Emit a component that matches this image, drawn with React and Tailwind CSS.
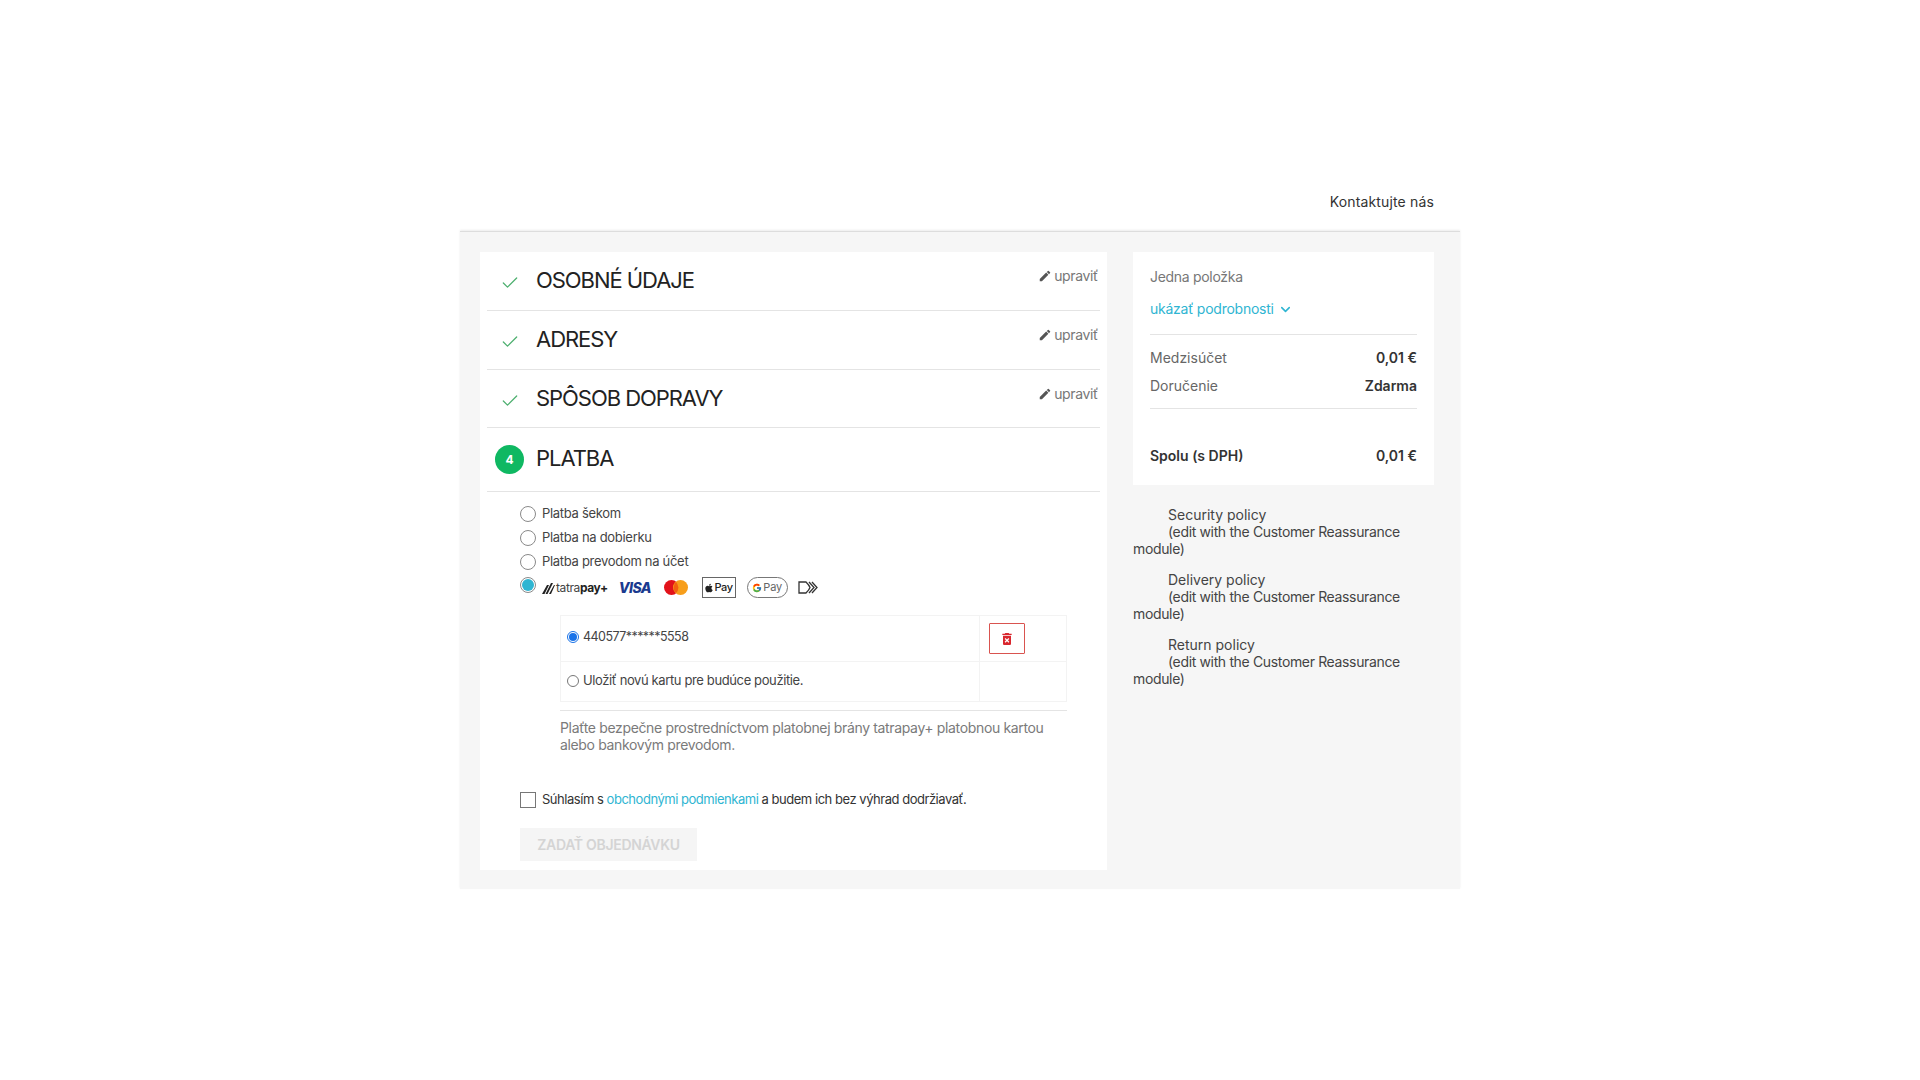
import { Check, ChevronDown } from 'lucide-react'
import { MdEdit, MdDeleteForever } from 'react-icons/md'
import { FaApple } from 'react-icons/fa'
import { FcGoogle } from 'react-icons/fc'

const DONE_STEPS = [
  { title: 'OSOBNÉ ÚDAJE', height: 'h-[59px]' },
  { title: 'ADRESY', height: 'h-[59px]' },
  { title: 'SPÔSOB DOPRAVY', height: 'h-[58px]' },
]

const PAYMENTS = ['Platba šekom', 'Platba na dobierku', 'Platba prevodom na účet']

const POLICIES = ['Security policy', 'Delivery policy', 'Return policy']

function DoneStep({ title, height }) {
  return (
    <div className={`${height} flex border-b border-[#e4e4e4] relative`}>
      <div className="w-[49px] flex justify-center items-center pt-[4px] pr-[3px]">
        <Check className="w-[20px] h-[20px] text-[#4caf6e]" strokeWidth={1.5} />
      </div>
      <h2 className="text-[22px] leading-[58px] font-normal text-[#222] tracking-[-1.05px] -mt-[1px]">{title}</h2>
      <button className="absolute right-[2px] top-[14px] flex items-center text-[14px] leading-[20px] text-[#777] tracking-[-0.35px]">
        <MdEdit className="w-[14px] h-[14px] mr-[2px] text-[#555]" />
        upraviť
      </button>
    </div>
  )
}

function Radio({ selected, className = '' }) {
  return (
    <span className={`w-[16px] h-[16px] rounded-full shrink-0 border border-[#8a8a8a] bg-white flex items-center justify-center ${className}`}>
      {selected && <span className="w-[12px] h-[12px] rounded-full bg-[#2fb5d2]" />}
    </span>
  )
}

function SmallRadio({ selected }) {
  return (
    <span className={`w-[12px] h-[12px] rounded-full shrink-0 border ${selected ? 'border-[#1a73e8]' : 'border-[#777]'} bg-white flex items-center justify-center`}>
      {selected && <span className="w-[8px] h-[8px] rounded-full bg-[#1a73e8]" />}
    </span>
  )
}

function PaymentLogos() {
  return (
    <div className="flex items-center ml-[6px] h-[26px] mt-[3px]">
      <svg width="13" height="12" viewBox="0 0 13 12" className="mr-[1px]">
        <path d="M0 12 L5 3 L7 3 L2.5 12 Z M3.5 12 L9 1 L11 1 L5.5 12 Z M7 12 L12 3 L13 3 L9 12 Z" fill="#222" />
      </svg>
      <span className="text-[12px] text-[#444] tracking-[-0.4px]">tatra</span>
      <span className="text-[12px] font-bold text-[#222] tracking-[-0.4px]">pay+</span>
      <span className="ml-[11px] w-[31px] text-[14px] font-extrabold italic text-[#1a3a8f] tracking-[-0.5px]">VISA</span>
      <svg width="24" height="15" viewBox="0 0 24 15" className="ml-[14px]">
        <circle cx="7.5" cy="7.5" r="7.5" fill="#e2121a" />
        <circle cx="16.5" cy="7.5" r="7.5" fill="#f79e1b" />
        <path d="M12 2 A7.5 7.5 0 0 1 12 13 A7.5 7.5 0 0 1 12 2 Z" fill="#f2600f" />
      </svg>
      <span className="ml-[14px] w-[34px] h-[21px] border border-[#666] flex items-center justify-center text-[11px] font-medium text-[#222] tracking-[-0.3px]">
        <FaApple className="w-[10px] h-[10px]" />
        Pay
      </span>
      <span className="ml-[11px] w-[41px] h-[21px] border border-[#777] rounded-full flex items-center justify-center text-[11px] text-[#666] tracking-[-0.2px]">
        <FcGoogle className="w-[10px] h-[10px] mr-[1px]" />
        Pay
      </span>
      <svg width="20" height="13" viewBox="0 0 20 13" className="ml-[10px]" fill="none" stroke="#333" strokeWidth="1.3">
        <path d="M8 1 H1 V12 H8 C10 10 11.5 8 12 6.5 C11.5 5 10 3 8 1 Z" />
        <path d="M11 1 L16 6.5 L11 12" />
        <path d="M14 1 L19 6.5 L14 12" />
      </svg>
    </div>
  )
}

function Totals({ label, value, bold, className }) {
  return (
    <div className={`flex justify-between items-center ${className}`}>
      <span className={bold ? 'font-semibold text-[#333]' : 'text-[#666]'}>{label}</span>
      <span className="font-semibold text-[#333]">{value}</span>
    </div>
  )
}

export default function App() {
  return (
    <div className="min-h-screen bg-white font-['Inter',sans-serif]">
      <div className="w-[1000px] mx-auto pt-[191px]">
        {/* Header */}
        <div className="h-[40px] flex justify-end pr-[26px] text-[14px] leading-[22px] text-[#333] tracking-[0.15px]">
          Kontaktujte nás
        </div>

        <div className="bg-[#f6f6f6] border-t border-[#ddd] shadow-[0_-1px_2px_rgba(0,0,0,0.08)] flex gap-[26px] pl-[20px] pr-[26px] pt-[20px] pb-[19px]">
          {/* Checkout steps */}
          <div className="w-[627px] h-[618px] bg-white px-[7px] shrink-0">
            {DONE_STEPS.map(step => <DoneStep key={step.title} {...step} />)}

            <div className="h-[64px] flex items-center border-b border-[#e4e4e4]">
              <div className="w-[49px] flex justify-center pr-[4px]">
                <span className="w-[29px] h-[29px] rounded-full bg-[#0fb862] text-white text-[12px] font-bold flex items-center justify-center">4</span>
              </div>
              <h2 className="text-[22px] font-normal text-[#222] tracking-[-1.05px] -mt-[3px]">PLATBA</h2>
            </div>

            <div className="pl-[33px] pt-[10px]">
              {PAYMENTS.map(p => (
                <div key={p} className="h-[24px] flex items-center">
                  <Radio />
                  <span className="ml-[6px] text-[13px] text-[#444] tracking-[-0.3px]">{p}</span>
                </div>
              ))}
              <div className="h-[24px] flex items-center">
                <Radio selected className="-mt-[2px]" />
                <PaymentLogos />
              </div>
            </div>

            {/* Saved cards */}
            <div className="ml-[73px] w-[507px] mt-[17px] border-b border-[#e4e4e4]">
              <div className="h-[47px] flex border-y border-[#f3f3f3]">
                <div className="w-[420px] flex items-center pl-[6px] pb-[3px] border-x border-[#f3f3f3]">
                  <SmallRadio selected />
                  <span className="ml-[4px] text-[12.5px] text-[#444] tracking-[-0.55px]">440577******5558</span>
                </div>
                <div className="flex-1 pl-[9px] pt-[7px] border-r border-[#f3f3f3]">
                  <button className="w-[36px] h-[31px] flex items-center justify-center border border-[#d9534f] rounded-[1px] bg-white">
                    <MdDeleteForever className="w-[16px] h-[16px] text-[#d9272e]" />
                  </button>
                </div>
              </div>
              <div className="h-[40px] flex mb-[8px] border-b border-[#f3f3f3]">
                <div className="w-[420px] flex items-center pl-[6px] pb-[2px] border-x border-[#f3f3f3]">
                  <SmallRadio />
                  <span className="ml-[4px] text-[13px] text-[#444] tracking-[-0.38px]">Uložiť novú kartu pre budúce použitie.</span>
                </div>
                <div className="flex-1 border-r border-[#f3f3f3]" />
              </div>
            </div>

            <p className="ml-[73px] w-[507px] mt-[8px] text-[14px] leading-[17px] text-[#7a7a7a] tracking-[-0.35px]">
              Plaťte bezpečne prostredníctvom platobnej brány tatrapay+ platobnou kartou alebo bankovým prevodom.
            </p>

            <div className="ml-[33px] mt-[37px] flex items-center">
              <span className="w-[16px] h-[16px] border border-[#777] bg-white shrink-0" />
              <span className="ml-[6px] text-[13px] text-[#333] tracking-[-0.47px]">
                Súhlasím s <a className="text-[#2fb5d2]">obchodnými podmienkami</a> a budem ich bez výhrad dodržiavať.
              </span>
            </div>

            <button className="ml-[33px] mt-[18px] w-[177px] h-[33px] bg-[#f5f5f5] text-[14px] font-semibold text-[#d4d4d4] tracking-[-0.3px]">
              ZADAŤ OBJEDNÁVKU
            </button>
          </div>

          {/* Cart summary */}
          <div className="flex-1 min-w-0">
            <div className="h-[233px] bg-white px-[17px] text-[14px]">
              <div className="pt-[15px] leading-[20px] text-[#777] tracking-[-0.3px]">Jedna položka</div>
              <div className="mt-[11px] h-[20px] flex items-center text-[#2fb5d2] tracking-[-0.25px]">
                ukázať podrobnosti
                <ChevronDown className="w-[15px] h-[15px] ml-[4px] mt-[2px]" strokeWidth={2.5} />
              </div>
              <div className="mt-[16px] border-t border-[#e4e4e4]" />
              <Totals label="Medzisúčet" value="0,01 €" className="mt-[12px] h-[20px]" />
              <Totals label="Doručenie" value="Zdarma" className="mt-[8px] h-[20px]" />
              <div className="mt-[13px] border-t border-[#e4e4e4]" />
              <Totals label="Spolu (s DPH)" value="0,01 €" bold className="mt-[36px] h-[20px]" />
            </div>

            <div className="mt-[21px]">
              {POLICIES.map(name => (
                <div key={name} className="mb-[14px] text-[14px] leading-[17px] text-[#444]">
                  <div className="pl-[35px]">{name}</div>
                  <div className="indent-[35px] pr-[20px] tracking-[-0.35px]">(edit with the Customer Reassurance module)</div>
                </div>
              ))}
            </div>
          </div>
        </div>
      </div>
    </div>
  )
}
